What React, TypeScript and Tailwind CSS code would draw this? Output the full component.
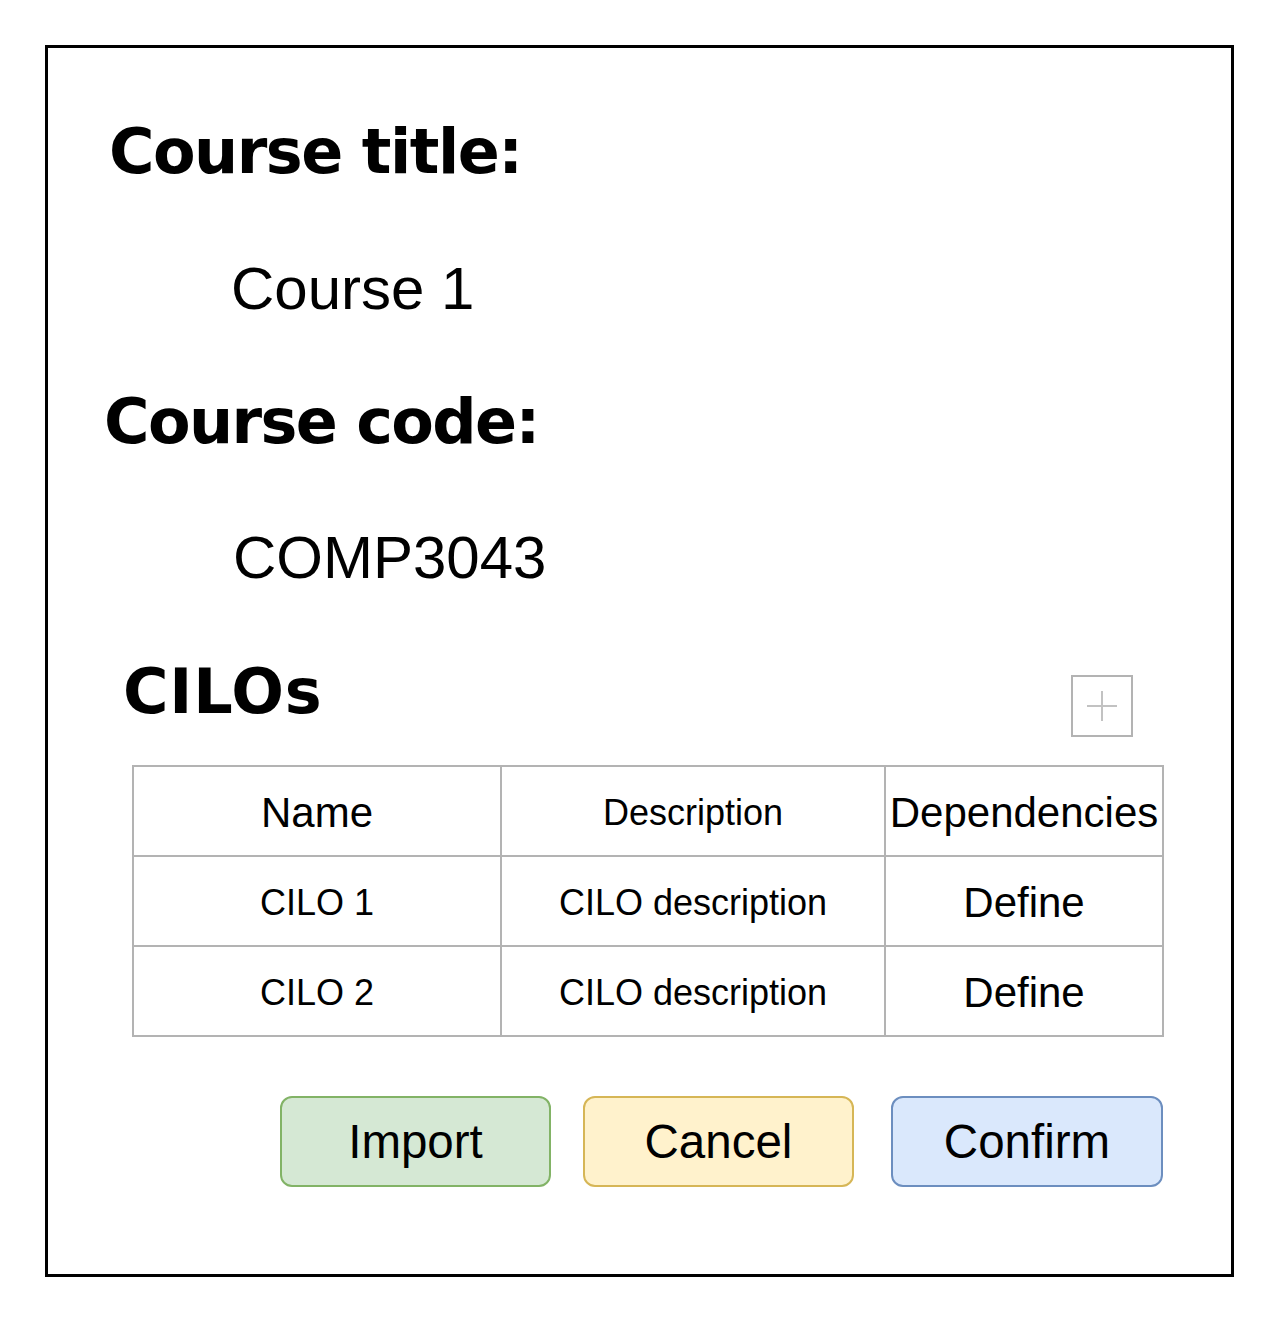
import React from "react";

const heading = "font-['DejaVu_Sans',Verdana,sans-serif] font-bold text-black leading-none";
const body = "font-['Liberation_Sans',Arial,sans-serif] text-black leading-none";

function Cell({ children, size }: { children: React.ReactNode; size: string }) {
  return (
    <div
      className={`h-[90px] border-r-2 border-b-2 border-[#b3b3b3] flex items-center justify-center pt-[3px] whitespace-nowrap ${body} ${size}`}
    >
      {children}
    </div>
  );
}

export default function App() {
  const rows = [
    ["CILO 1", "CILO description", "Define"],
    ["CILO 2", "CILO description", "Define"],
  ];
  return (
    <div className="w-[1278px] h-[1323px] bg-white pt-[45px] pl-[45px]">
      <div className="w-[1189px] h-[1232px] border-[3px] border-black flex flex-col">
        <div className={`${heading} text-[62px] tracking-[-1.5px] ml-[61px] mt-[73px] whitespace-nowrap`}>Course title:</div>
        <div className={`${body} text-[60px] ml-[183px] mt-[76px] whitespace-nowrap`}>Course 1</div>
        <div className={`${heading} text-[62px] tracking-[-1.6px] ml-[56px] mt-[72px] whitespace-nowrap`}>Course code:</div>
        <div className={`${body} text-[60px] ml-[185px] mt-[75px] whitespace-nowrap`}>COMP3043</div>
        <div className="flex items-start mt-[73px]">
          <div className={`${heading} text-[62px] tracking-[0.8px] ml-[75px] whitespace-nowrap`}>CILOs</div>
          <div className="ml-auto mr-[98px] mt-[14px] w-[62px] h-[62px] border-2 border-[#b3b3b3] flex items-center justify-center">
            <svg width="32" height="32" viewBox="0 0 32 32">
              <line x1="1" y1="16" x2="31" y2="16" stroke="#c2c2c2" strokeWidth="2" />
              <line x1="16" y1="1" x2="16" y2="31" stroke="#c2c2c2" strokeWidth="2" />
            </svg>
          </div>
        </div>
        <div className="ml-[84px] mt-[28px] w-[1032px] border-l-2 border-t-2 border-[#b3b3b3] grid grid-cols-[368px_384px_278px]">
          <Cell size="text-[42px]">Name</Cell>
          <Cell size="text-[36px]">Description</Cell>
          <Cell size="text-[42px]">Dependencies</Cell>
          {rows.map((r, i) => (
            <React.Fragment key={i}>
              <Cell size="text-[36px]">{r[0]}</Cell>
              <Cell size="text-[36px]">{r[1]}</Cell>
              <Cell size="text-[42px]">{r[2]}</Cell>
            </React.Fragment>
          ))}
        </div>
        <div className="flex mt-[59px] ml-[232px]">
          <div className={`w-[271px] h-[91px] rounded-[12px] border-2 border-[#82b366] bg-[#d5e8d4] flex items-center justify-center ${body} text-[47.5px]`}>
            Import
          </div>
          <div className={`ml-[32px] w-[271px] h-[91px] rounded-[12px] border-2 border-[#d6b656] bg-[#fff2cc] flex items-center justify-center ${body} text-[47.5px]`}>
            Cancel
          </div>
          <div className={`ml-[37px] w-[272px] h-[91px] rounded-[12px] border-2 border-[#6c8ebf] bg-[#dae8fc] flex items-center justify-center ${body} text-[47.5px]`}>
            Confirm
          </div>
        </div>
      </div>
    </div>
  );
}
